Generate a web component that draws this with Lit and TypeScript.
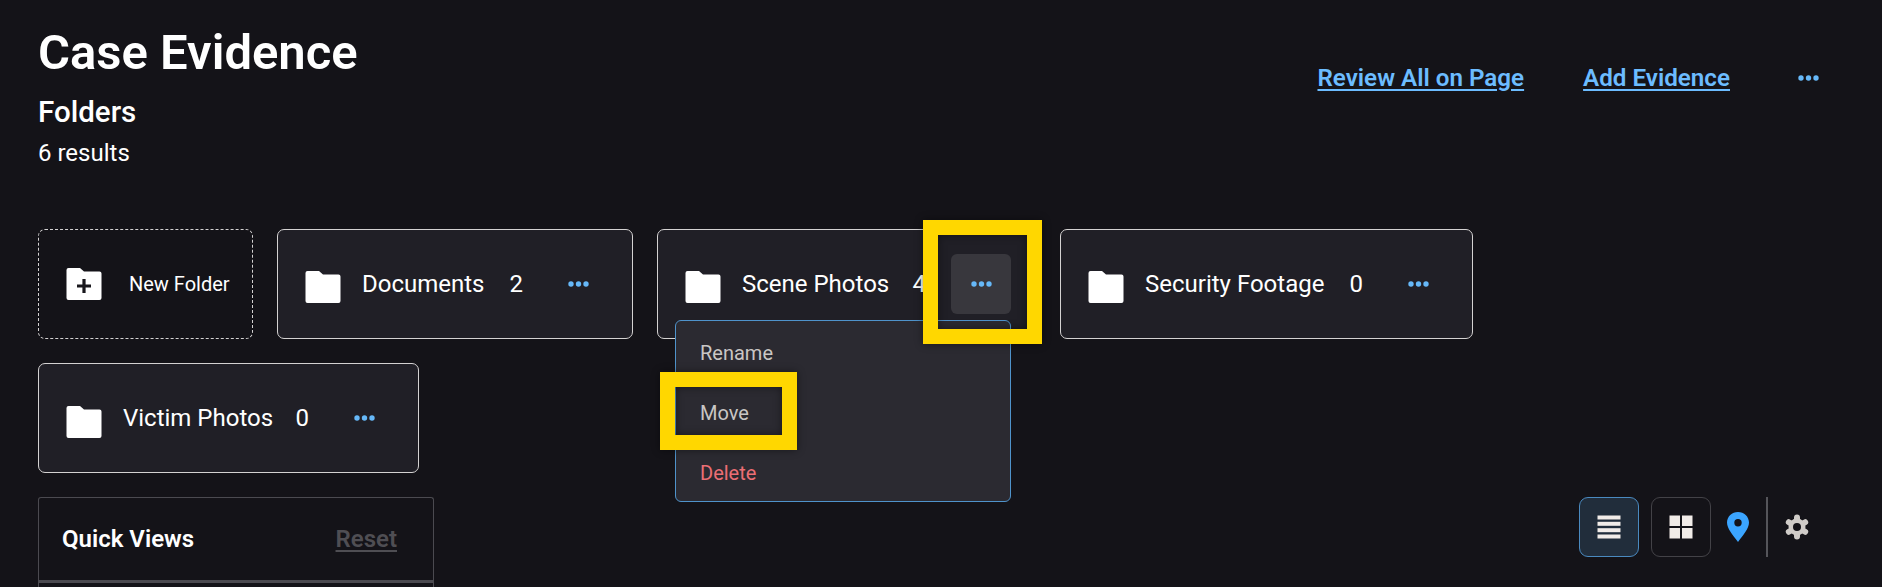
import { LitElement, html, css, svg } from "lit";
import { customElement } from "lit/decorators.js";

const folderPath = "M2 0h11.5l4 3.5H33a2 2 0 0 1 2 2V30a2 2 0 0 1-2 2H2a2 2 0 0 1-2-2V2a2 2 0 0 1 2-2z";

const folder = (plus = false) => html`<svg class="folder ${plus ? "" : "shift"}" width="36" height="32" viewBox="0 0 35 32">
  <path d=${folderPath} fill="#fff"></path>
  ${plus ? svg`<path d="M17.5 11v14M10.5 18h14" stroke="#18171c" stroke-width="3.2"></path>` : ""}
</svg>`;

const dots = html`<svg width="21" height="6" viewBox="0 0 21 6" fill="#66b8f8">
  <circle cx="3" cy="3" r="2.7"></circle><circle cx="10.5" cy="3" r="2.7"></circle><circle cx="18" cy="3" r="2.7"></circle>
</svg>`;

const folders = [
  { name: "Documents", count: 2, width: 356 },
  { name: "Scene Photos", count: 4, width: 379, open: true },
  { name: "Security Footage", count: 0, width: 413 },
  { name: "Victim Photos", count: 0, width: 381 },
];

@customElement("app-root")
export class AppRoot extends LitElement {
  static styles = css`
    :host {
      display: block;
      height: 587px;
      overflow: hidden;
      background: #141318;
      color: #fff;
      font-family: Roboto, "Noto Sans", sans-serif;
      box-sizing: border-box;
      padding: 23px 44px 0 38px;
    }
    * { box-sizing: border-box; }
    .head { display: flex; justify-content: space-between; align-items: flex-start; }
    h1 { margin: 0; font-size: 49px; line-height: 60px; font-weight: 600; }
    h2 { margin: 11px 0 0; font-size: 29.5px; line-height: 36px; font-weight: 500; }
    .results { margin-top: 9px; font-size: 24px; line-height: 28px; }
    .actions { display: flex; align-items: center; margin-top: 24px; }
    .actions a { color: #6cbcff; font-size: 24.2px; line-height: 62px; font-weight: 600; text-decoration: underline; text-underline-offset: 3px; }
    .actions a + a { margin-left: 59px; }
    .more { width: 60px; height: 60px; display: flex; align-items: center; justify-content: center; border-radius: 6px; position: relative; flex: none; }
    .actions .more { margin-left: 48px; }
    .grid { display: flex; flex-wrap: wrap; gap: 24.5px 24px; margin-top: 61.500px; }
    .card {
      position: relative; height: 110px; display: flex; align-items: center;
      background: #201f26; border: 1.5px solid #d4d2d2; border-radius: 7px;
      padding: 0 24px 0 27px; font-size: 24px;
    }
    .card.new { width: 215px; background: transparent; border: 1.5px dashed #d4d2d2; font-size: 20px; }
    .card.new span { margin-left: 27px; white-space: nowrap; }
    .folder { flex: none; }
    .folder.shift { margin-top: 7px; }
    .name { flex: 1; margin-left: 21px; white-space: nowrap; }
    .count { margin-right: 25px; }
    .more.active { background: #38373d; }
    .mark {
      position: absolute; border: 15px solid #ffd700; z-index: 5;
      box-shadow: 0 0 8px rgba(0, 0, 0, .45), inset 0 0 8px rgba(0, 0, 0, .45);
      pointer-events: none;
    }
    .mark.btn { left: -28px; right: -31px; top: -34px; bottom: -30px; }
    .mark.row { left: -16px; width: 137px; top: -11px; bottom: -7px; }
    .menu {
      position: absolute; left: 16.5px; top: 90px; width: 336px; height: 182px; z-index: 3;
      background: #2b2a31; border: 1.5px solid #4f93cb; border-radius: 6px; padding-top: 2px;
      font-size: 20px; color: #c9c6c4;
    }
    .item { position: relative; height: 60px; display: flex; align-items: center; padding-left: 24.5px; }
    .item.danger { color: #ec6f75; }
    .bottom { display: flex; justify-content: space-between; margin-top: 24px; }
    .panel {
      width: 396px; height: 120px; border: 1.5px solid #4b4a50; border-bottom: 0; border-radius: 3px 3px 0 0;
    }
    .panel-head {
      height: 85px; display: flex; align-items: center; justify-content: space-between;
      padding: 0 36px 0 23px; border-bottom: 3px solid #4b4a50;
    }
    .panel-head b { font-size: 24px; font-weight: 600; }
    .panel-head a { font-size: 24px; font-weight: 600; color: #4f4e53; text-decoration: underline; text-underline-offset: 3px; }
    .tools { display: flex; align-items: center; height: 60px; margin-right: 29px; }
    .tool { width: 60px; height: 60px; display: flex; align-items: center; justify-content: center; border: 1.5px solid #434247; border-radius: 9px; }
    .tool.on { background: #212d3b; border-color: #4a8ac0; margin-right: 12px; }
    .pin { margin-left: 16px; display: block; }
    .sep { width: 2px; height: 60px; background: #55555a; margin-left: 17px; }
    .gear { margin-left: 17px; display: block; }
  `;

  card(f: { name: string; count: number; width: number; open?: boolean }) {
    return html`<div class="card" style="width:${f.width}px">
      ${folder()}
      <span class="name">${f.name}</span>
      <span class="count">${f.count}</span>
      <div class="more ${f.open ? "active" : ""}">${dots}${f.open ? html`<div class="mark btn"></div>` : ""}</div>
      ${f.open
        ? html`<div class="menu">
            <div class="item">Rename</div>
            <div class="item">Move<div class="mark row"></div></div>
            <div class="item danger">Delete</div>
          </div>`
        : ""}
    </div>`;
  }

  render() {
    return html`
      <div class="head">
        <div>
          <h1>Case Evidence</h1>
          <h2>Folders</h2>
          <div class="results">6 results</div>
        </div>
        <div class="actions">
          <a>Review All on Page</a>
          <a>Add Evidence</a>
          <div class="more">${dots}</div>
        </div>
      </div>
      <div class="grid">
        <div class="card new">${folder(true)}<span>New Folder</span></div>
        ${folders.map((f) => this.card(f))}
      </div>
      <div class="bottom">
        <div class="panel">
          <div class="panel-head"><b>Quick Views</b><a>Reset</a></div>
        </div>
        <div class="tools">
          <div class="tool on">
            <svg width="24" height="24" viewBox="0 0 24 24" fill="#f1ece8"><rect x="0.5" y="0.500" width="23" height="4"></rect><rect x="0.5" y="6.800" width="23" height="4"></rect><rect x="0.5" y="13.200" width="23" height="4"></rect><rect x="0.5" y="19.500" width="23" height="4"></rect></svg>
          </div>
          <div class="tool">
            <svg width="24" height="24" viewBox="0 0 24 24" fill="#f1ece8"><rect x="0.5" y="0.5" width="10.5" height="10.5"></rect><rect x="13" y="0.5" width="10.5" height="10.5"></rect><rect x="0.5" y="13" width="10.5" height="10.5"></rect><rect x="13" y="13" width="10.5" height="10.5"></rect></svg>
          </div>
          <svg class="pin" width="22" height="30" viewBox="0 0 22 30"><path fill-rule="evenodd" fill="#3ba5ff" d="M11 0c6 0 11 4.600 11 10.600 0 6-5.600 12.400-11 19.400C5.600 23 0 16.600 0 10.600 0 4.600 5 0 11 0zm0 7a3.700 3.700 0 1 0 0 7.400A3.700 3.700 0 0 0 11 7z"></path></svg>
          <div class="sep"></div>
          <svg class="gear" width="24" height="26" viewBox="0 0 24 26">
            <g stroke="#d0ccc8" stroke-width="6" stroke-linecap="round">
              <path d="M12 3.500V22.500M3.800 8.250L20.200 17.750M3.800 17.750L20.200 8.250"></path>
            </g>
            <circle cx="12" cy="13" r="8.500" fill="#d0ccc8"></circle>
            <circle cx="12" cy="13" r="4" fill="#141318"></circle>
          </svg>
        </div>
      </div>
    `;
  }
}
